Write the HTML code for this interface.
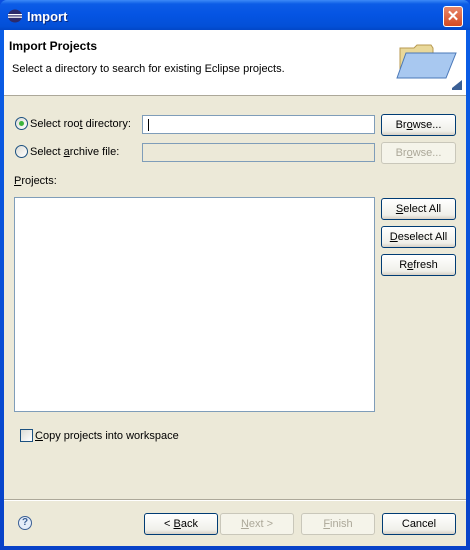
<!DOCTYPE html>
<html><head><style>
*{margin:0;padding:0;box-sizing:border-box}
body{width:470px;height:550px;overflow:hidden;font-family:Tahoma,"Liberation Sans",sans-serif;font-size:11px;color:#000;background:#0a4ee0}
.win{position:absolute;left:0;top:0;width:470px;height:550px;background:linear-gradient(#0a5fe8,#0842c8);border-radius:7px 7px 0 0}
.title{position:absolute;left:0;top:0;width:470px;height:30px;border-radius:7px 7px 0 0;background:linear-gradient(#3d8af7 0,#0c5ce6 4px,#0554e3 15px,#0350d8 26px,#0247c7 30px)}
.ttext{position:absolute;left:27px;top:9px;color:#fff;font-weight:bold;font-size:13px;text-shadow:1px 1px #0a2a80}
.close{position:absolute;left:443px;top:6px;width:20px;height:21px;border:1px solid #fff;border-radius:3px;background:linear-gradient(#e8876a,#d54a22);color:#fff;font-weight:bold;text-align:center;font-size:15px;line-height:19px}
.client{position:absolute;left:4px;top:30px;width:462px;height:516px;background:#ece9d8}
.hdr{position:absolute;left:0;top:0;width:462px;height:66px;background:#fff;border-bottom:1px solid #aca899}
.a{position:absolute;white-space:nowrap}
.btn{position:absolute;height:22px;border:1px solid #003c74;border-radius:3px;background:linear-gradient(#fff,#f0f0ea 80%,#d6d0c5);text-align:center;line-height:21px}
.btn.dis{border-color:#c9c7ba;color:#aca899;background:#f5f4ea}
.field{position:absolute;border:1px solid #7f9db9;background:#fff}
.radio{position:absolute;width:13px;height:13px;border-radius:50%;border:1px solid #1c5180;background:linear-gradient(135deg,#dcdcd6,#fff)}
u{text-decoration:underline}
</style></head><body>
<div class="win">
<div class="title">
<svg style="position:absolute;left:7px;top:9px" width="16" height="14" viewBox="0 0 16 14"><ellipse cx="8" cy="7" rx="7" ry="6.5" fill="#2c2a6a"/><rect x="1" y="5" width="14" height="1.3" fill="#fff"/><rect x="1" y="7.5" width="14" height="1.3" fill="#fff"/></svg>
<div class="ttext">Import</div>
<div class="close">✕</div>
</div>
<div class="client">
<div class="hdr">
<div class="a" style="left:5px;top:9px;font-weight:bold;font-size:12px">Import Projects</div>
<div class="a" style="left:8px;top:33px">Select a directory to search for existing Eclipse projects.</div>
<svg style="position:absolute;left:390px;top:8px" width="70" height="56" viewBox="0 0 70 56"><path d="M6 10 h14 l3 -3 h14 l2 3 v30 h-33z" fill="#e9d89a" stroke="#b89a50"/><path d="M3 40 L12 15 H62 L52 40 Z" fill="#a8c8f0" stroke="#4a78b8"/><path d="M58 50 L68 42 V52 H58Z" fill="#3a5f95"/></svg>
</div>
<div class="radio" style="left:11px;top:87px"><div style="position:absolute;left:3px;top:3px;width:5px;height:5px;border-radius:50%;background:#3cb43c"></div></div>
<div class="a" style="left:26px;top:88px">Select roo<u>t</u> directory:</div>
<div class="field" style="left:138px;top:85px;width:233px;height:19px"><div style="position:absolute;left:5px;top:3px;width:1px;height:12px;background:#000"></div></div>
<div class="btn" style="left:377px;top:84px;width:75px">Br<u>o</u>wse...</div>
<div class="radio" style="left:11px;top:115px"></div>
<div class="a" style="left:26px;top:116px">Select <u>a</u>rchive file:</div>
<div class="field" style="left:138px;top:113px;width:233px;height:19px;background:#ece9d8"></div>
<div class="btn dis" style="left:377px;top:112px;width:75px">Br<u>o</u>wse...</div>
<div class="a" style="left:10px;top:145px"><u>P</u>rojects:</div>
<div class="field" style="left:10px;top:167px;width:361px;height:215px"></div>
<div class="btn" style="left:377px;top:168px;width:75px"><u>S</u>elect All</div>
<div class="btn" style="left:377px;top:196px;width:75px"><u>D</u>eselect All</div>
<div class="btn" style="left:377px;top:224px;width:75px">R<u>e</u>fresh</div>
<div style="position:absolute;left:16px;top:399px;width:13px;height:13px;border:1px solid #1c5180;background:linear-gradient(135deg,#dcdcd6,#fff)"></div>
<div class="a" style="left:31px;top:400px"><u>C</u>opy projects into workspace</div>
<div style="position:absolute;left:0;top:469px;width:462px;height:1px;background:#aca899"></div>
<div style="position:absolute;left:0;top:470px;width:462px;height:1px;background:#fff"></div>
<div style="position:absolute;left:14px;top:486px;width:14px;height:14px;border-radius:50%;border:1px solid #3a5f95;background:#e4ecf8;text-align:center;font-weight:bold;font-size:10px;line-height:12px;color:#3a5f95">?</div>
<div class="btn" style="left:140px;top:483px;width:74px">&lt; <u>B</u>ack</div>
<div class="btn dis" style="left:216px;top:483px;width:74px"><u>N</u>ext &gt;</div>
<div class="btn dis" style="left:297px;top:483px;width:74px"><u>F</u>inish</div>
<div class="btn" style="left:378px;top:483px;width:74px">Cancel</div>
</div>
</div>
</body></html>
